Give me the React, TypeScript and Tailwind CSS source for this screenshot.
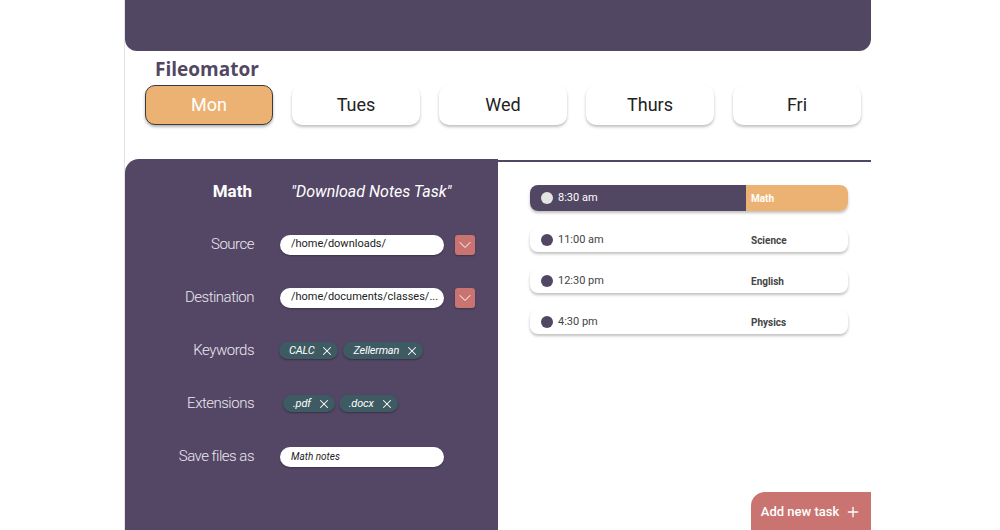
import { X, ChevronDown, Plus } from "lucide-react";

const days = ["Mon", "Tues", "Wed", "Thurs", "Fri"];

const schedule = [
  { time: "8:30 am", subject: "Math", active: true },
  { time: "11:00 am", subject: "Science", active: false },
  { time: "12:30 pm", subject: "English", active: false },
  { time: "4:30 pm", subject: "Physics", active: false },
];

const Chip = ({ label }: { label: string }) => (
  <div className="h-[17px] flex items-center gap-[6px] pl-[10px] pr-[4px] rounded-full bg-[#3e5a62] shadow-[0_1px_2px_rgba(0,0,0,0.35)]">
    <span className="text-[11px] italic text-white leading-none tracking-[-0.2px]">{label}</span>
    <X size={14} strokeWidth={1.8} className="text-white" />
  </div>
);

const Dropdown = () => (
  <div className="ml-[11px] w-[20px] h-[20px] rounded-[3px] bg-[#c97470] flex items-center justify-center shadow-[0_1px_2px_rgba(0,0,0,0.3)]">
    <ChevronDown size={20} strokeWidth={1.2} className="text-white" />
  </div>
);

const Row = ({ label, children }: { label: string; children: React.ReactNode }) => (
  <div className="h-[53px] flex items-center">
    <div className="w-[129px] text-right text-[15px] font-light tracking-[-0.5px] text-[#ece8f2]">{label}</div>
    <div className="ml-[26px] flex items-center">{children}</div>
  </div>
);

export default function App() {
  return (
    <div className="w-full h-[530px] bg-white overflow-hidden font-['Roboto',sans-serif]">
      <div className="ml-[124px] w-[747px] h-[530px] border-l border-[#e3e3e3] flex flex-col">
        <div className="h-[51px] bg-[#524763] rounded-b-[12px]" />

        <h1 className="mt-[6px] ml-[30px] text-[19px] leading-[24px] font-bold text-[#524763] font-['Open_Sans',sans-serif]">
          Fileomator
        </h1>

        <div className="mt-[4px] ml-[20px] flex gap-[19px]">
          {days.map((d) =>
            d === "Mon" ? (
              <div
                key={d}
                className="w-[128px] h-[40px] pb-[1px] rounded-[10px] bg-[#ecb273] border border-[#3b3b3b] flex items-center justify-center text-[18px] text-white shadow-[0_2px_3px_rgba(0,0,0,0.3)]"
              >
                {d}
              </div>
            ) : (
              <div
                key={d}
                className="w-[128px] h-[40px] pb-[2px] rounded-[10px] bg-white flex items-center justify-center text-[18px] text-[#222] shadow-[0_2px_3px_rgba(0,0,0,0.25)]"
              >
                {d}
              </div>
            )
          )}
        </div>

        <div className="mt-[34px] flex flex-1">
          <div className="w-[373px] bg-[#544766] rounded-tl-[14px] pt-[6px]">
            <div className="h-[53px] flex items-center">
              <div className="w-[127px] text-right text-[17px] font-bold text-white">Math</div>
              <div className="ml-[39px] text-[16px] italic text-white">"Download Notes Task"</div>
            </div>
            <Row label="Source">
              <div className="w-[164px] h-[20px] rounded-full bg-white flex items-center pl-[11px] text-[11px] text-[#222] shadow-[0_1px_2px_rgba(0,0,0,0.3)]">
                /home/downloads/
              </div>
              <Dropdown />
            </Row>
            <Row label="Destination">
              <div className="w-[164px] h-[20px] rounded-full bg-white flex items-center pl-[11px] text-[11px] text-[#222] shadow-[0_1px_2px_rgba(0,0,0,0.3)]">
                /home/documents/classes/...
              </div>
              <Dropdown />
            </Row>
            <Row label="Keywords">
              <div className="-ml-[1px] flex gap-[5px]">
                <Chip label="CALC" />
                <Chip label="Zellerman" />
              </div>
            </Row>
            <Row label="Extensions">
              <div className="ml-[3px] flex gap-[4px]">
                <Chip label=".pdf" />
                <Chip label=".docx" />
              </div>
            </Row>
            <Row label="Save files as">
              <div className="w-[164px] h-[20px] rounded-full bg-white flex items-center pl-[11px] text-[10px] italic text-[#222] shadow-[0_1px_2px_rgba(0,0,0,0.3)]">
                Math notes
              </div>
            </Row>
          </div>

          <div className="flex-1 flex flex-col border-t-2 border-[#524763] mt-[1px]">
            <div className="pt-[23px] pl-[32px] flex flex-col gap-[17px]">
              {schedule.map((s) =>
                s.active ? (
                  <div
                    key={s.time}
                    className="w-[318px] h-[26px] rounded-[8px] overflow-hidden flex shadow-[0_2px_3px_rgba(0,0,0,0.25)]"
                  >
                    <div className="flex-1 bg-[#524763] flex items-center pl-[11px] gap-[5px]">
                      <div className="w-[12px] h-[12px] rounded-full bg-[#e4e4e4]" />
                      <span className="text-[11px] text-white">{s.time}</span>
                    </div>
                    <div className="w-[102px] bg-[#ecb273] flex items-center pl-[5px] text-[10px] font-bold text-white">
                      {s.subject}
                    </div>
                  </div>
                ) : (
                  <div
                    key={s.time}
                    className="w-[318px] h-[24px] rounded-[8px] bg-white flex items-center shadow-[0_2px_3px_rgba(0,0,0,0.25)]"
                  >
                    <div className="flex-1 flex items-center pl-[11px] gap-[5px]">
                      <div className="w-[12px] h-[12px] rounded-full bg-[#524763]" />
                      <span className="text-[11px] text-[#444]">{s.time}</span>
                    </div>
                    <div className="w-[97px] text-[10px] font-bold text-[#444]">{s.subject}</div>
                  </div>
                )
              )}
            </div>

            <div className="mt-auto self-end w-[120px] h-[38px] pt-[2px] rounded-tl-[14px] bg-[#c97470] flex items-center justify-center gap-[6px] text-[13px] font-medium text-white">
              Add new task
              <Plus size={16} strokeWidth={2} />
            </div>
          </div>
        </div>
      </div>
    </div>
  );
}
